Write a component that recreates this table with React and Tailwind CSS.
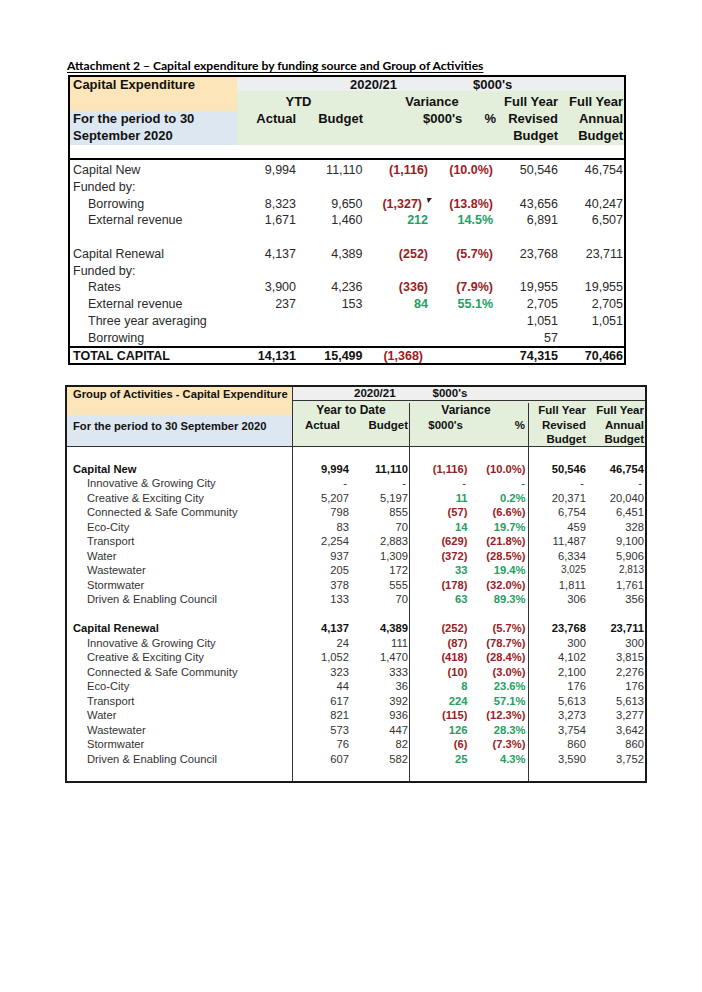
import React from "react";

const RED = "text-[#9b1c24]";
const GREEN = "text-[#24a062]";

function Cell1({ v, pr }) {
  if (v == null || v === "") return <div />;
  if (typeof v === "string") return <div className={`text-right ${pr}`}>{v}</div>;
  const color = v.c === "r" ? RED : GREEN;
  return (
    <div className={`text-right font-bold ${color} ${pr} relative`}>
      <span className={v.mark ? "mr-[6px]" : ""}>{v.v}</span>
      {v.mark && (
        <svg className="absolute right-[-3px] top-[2px]" width="5" height="5" viewBox="0 0 5 5">
          <polygon points="0,0 5,0 1,5" fill="#3b1414" />
        </svg>
      )}
    </div>
  );
}

const t1pr = ["pr-[3px]", "pr-[1.5px]", "pr-[1px]", "pr-[1px]", "pr-[1px]", "pr-[1px]"];

function Row1({ label, indent, vals = [] }) {
  return (
    <div className="grid grid-cols-[167px_62px_65px_65px_65px_65px_65px] h-[16.75px] leading-[16.75px]">
      <div className={indent ? "pl-[18px]" : "pl-[3px]"}>{label}</div>
      {[0, 1, 2, 3, 4, 5].map((i) => (
        <Cell1 key={i} v={vals[i]} pr={t1pr[i]} />
      ))}
    </div>
  );
}

const r = (v, mark) => ({ v, c: "r", mark });
const g = (v) => ({ v, c: "g" });

function Table1() {
  return (
    <div className="ml-[68px] mt-[1px] w-[558px] border-2 border-black text-[12.5px] text-[#2a2a2a]">
      <div className="flex h-[68px] text-[13px] font-bold text-[#111]">
        <div className="w-[167px] flex flex-col">
          <div className="h-[34px] bg-[#fce5b8] pl-[3px] leading-[16px]">Capital Expenditure</div>
          <div className="h-[34px] bg-[#dde7f2] pl-[3px] leading-[16.5px]">
            For the period to 30
            <br />
            September 2020
          </div>
        </div>
        <div className="w-[387px] flex flex-col">
          <div className="h-[14px] bg-[#eceef0] flex leading-[15px]">
            <span className="ml-[113px]">2020/21</span>
            <span className="ml-[76px]">$000's</span>
          </div>
          <div className="h-[54px] bg-[#e3efdb] pt-[2px] leading-[17px] grid grid-cols-[62px_65px_65px_65px_65px_65px] auto-rows-[17px]">
            <div className="col-span-2 text-center pr-[4px]">YTD</div>
            <div className="col-span-2 text-center pl-[6px]">Variance</div>
            <div className="text-right pr-[1px]">Full Year</div>
            <div className="text-right pr-[1px]">Full Year</div>
            <div className="text-right pr-[3px]">Actual</div>
            <div className="text-right pr-[1px]">Budget</div>
            <div className="col-span-2 flex justify-between pl-[59px] pr-[0px]">
              <span>$000's</span>
              <span className="mr-[-2px]">%</span>
            </div>
            <div className="text-right pr-[1px]">Revised</div>
            <div className="text-right pr-[1px]">Annual</div>
            <div />
            <div />
            <div />
            <div />
            <div className="text-right pr-[1px]">Budget</div>
            <div className="text-right pr-[1px]">Budget</div>
          </div>
        </div>
      </div>
      <div className="h-[13px]" />
      <div className="border-t-2 border-black pt-[2px]">
        <Row1 label="Capital New" vals={["9,994", "11,110", r("(1,116)"), r("(10.0%)"), "50,546", "46,754"]} />
        <Row1 label="Funded by:" />
        <Row1 label="Borrowing" indent vals={["8,323", "9,650", r("(1,327)", true), r("(13.8%)"), "43,656", "40,247"]} />
        <Row1 label="External revenue" indent vals={["1,671", "1,460", g("212"), g("14.5%"), "6,891", "6,507"]} />
        <Row1 label="" />
        <Row1 label="Capital Renewal" vals={["4,137", "4,389", r("(252)"), r("(5.7%)"), "23,768", "23,711"]} />
        <Row1 label="Funded by:" />
        <Row1 label="Rates" indent vals={["3,900", "4,236", r("(336)"), r("(7.9%)"), "19,955", "19,955"]} />
        <Row1 label="External revenue" indent vals={["237", "153", g("84"), g("55.1%"), "2,705", "2,705"]} />
        <Row1 label="Three year averaging" indent vals={["", "", "", "", "1,051", "1,051"]} />
        <Row1 label="Borrowing" indent vals={["", "", "", "", "57", ""]} />
      </div>
      <div className="border-t-2 border-black grid grid-cols-[167px_62px_65px_65px_65px_65px_65px] h-[17px] leading-[17px] font-bold text-[#111]">
        <div className="pl-[3px]">TOTAL CAPITAL</div>
        <div className="text-right pr-[3px]">14,131</div>
        <div className="text-right pr-[1.5px]">15,499</div>
        <div className={`text-right pr-[6px] ${RED}`}>(1,368)</div>
        <div />
        <div className="text-right pr-[1px]">74,315</div>
        <div className="text-right pr-[1px]">70,466</div>
      </div>
    </div>
  );
}

const t2pr = ["pr-[1px]", "pr-[1px]", "pr-[1.5px]", "pr-[2.5px]", "pr-[1px]", "pr-[1px]"];
const t2border = ["", "border-r border-[#333]", "", "border-r border-[#333]", "", ""];

function Cell2({ v, i, bold }) {
  const base = `text-right ${t2pr[i]} ${t2border[i]}`;
  if (v == null || v === "") return <div className={base} />;
  if (typeof v === "string") {
    if (v === "-") return <div className={`${base} pr-[3px]`}>-</div>;
    return <div className={`${base} ${bold ? "font-bold text-[#111]" : ""}`}>{v}</div>;
  }
  if (v.small) return <div className={`${base} text-[10px]`}>{v.v}</div>;
  const color = v.c === "r" ? RED : GREEN;
  return <div className={`${base} font-bold ${color}`}>{v.v}</div>;
}

function Row2({ label, indent, bold, vals = [] }) {
  return (
    <div className="grid grid-cols-[226px_57px_60px_59px_60px_58px_58px] h-[14.5px] leading-[14.5px]">
      <div className={`border-r border-[#333] ${indent ? "pl-[20px]" : "pl-[6px]"} ${bold ? "font-bold text-[#111]" : ""}`}>{label}</div>
      {[0, 1, 2, 3, 4, 5].map((i) => (
        <Cell2 key={i} v={vals[i]} i={i} bold={bold} />
      ))}
    </div>
  );
}

const sm = (v) => ({ v, small: true });

function Table2() {
  const d = "-";
  return (
    <div className="ml-[65px] mt-[20px] w-[582px] border-2 border-[#1a1a1a] text-[11.2px] text-[#333]">
      <div className="flex h-[60px] border-b border-[#333] font-bold text-[11.5px] text-[#111]">
        <div className="w-[226px] border-r border-[#333] flex flex-col text-[11.2px] whitespace-nowrap">
          <div className="h-[28px] bg-[#fce5b8] pl-[6px] leading-[15px]">Group of Activities - Capital Expenditure</div>
          <div className="h-[31px] bg-[#dde7f2] pl-[6px] leading-[22px]">For the period to 30 September 2020</div>
        </div>
        <div className="w-[352px] flex flex-col">
          <div className="h-[14px] bg-[#efefef] border-b border-[#333] flex leading-[13px]">
            <span className="ml-[61px]">2020/21</span>
            <span className="ml-[37px]">$000's</span>
          </div>
          <div className="h-[45px] bg-[#e3efdb] flex leading-[14.5px] pt-[2px]">
            <div className="w-[117px] border-r border-[#333]">
              <div className="text-center text-[12px]">Year to Date</div>
              <div className="grid grid-cols-[57px_59px]">
                <div className="text-center pl-[2px]">Actual</div>
                <div className="text-right pr-[1px]">Budget</div>
              </div>
            </div>
            <div className="w-[119px] border-r border-[#333]">
              <div className="text-center pr-[6px] text-[12px]">Variance</div>
              <div className="grid grid-cols-[59px_59px]">
                <div className="text-right pr-[6px]">$000's</div>
                <div className="text-right pr-[3px]">%</div>
              </div>
            </div>
            <div className="w-[116px] grid grid-cols-[58px_58px] auto-rows-[14.5px]">
              <div className="text-right pr-[1px]">Full Year</div>
              <div className="text-right pr-[1px]">Full Year</div>
              <div className="text-right pr-[1px]">Revised</div>
              <div className="text-right pr-[1px]">Annual</div>
              <div className="text-right pr-[1px]">Budget</div>
              <div className="text-right pr-[1px]">Budget</div>
            </div>
          </div>
        </div>
      </div>
      <div>
        <Row2 label="" />
        <Row2 label="Capital New" bold vals={["9,994", "11,110", r("(1,116)"), r("(10.0%)"), "50,546", "46,754"]} />
        <Row2 label="Innovative & Growing City" indent vals={[d, d, d, d, d, d]} />
        <Row2 label="Creative & Exciting City" indent vals={["5,207", "5,197", g("11"), g("0.2%"), "20,371", "20,040"]} />
        <Row2 label="Connected & Safe Community" indent vals={["798", "855", r("(57)"), r("(6.6%)"), "6,754", "6,451"]} />
        <Row2 label="Eco-City" indent vals={["83", "70", g("14"), g("19.7%"), "459", "328"]} />
        <Row2 label="Transport" indent vals={["2,254", "2,883", r("(629)"), r("(21.8%)"), "11,487", "9,100"]} />
        <Row2 label="Water" indent vals={["937", "1,309", r("(372)"), r("(28.5%)"), "6,334", "5,906"]} />
        <Row2 label="Wastewater" indent vals={["205", "172", g("33"), g("19.4%"), sm("3,025"), sm("2,813")]} />
        <Row2 label="Stormwater" indent vals={["378", "555", r("(178)"), r("(32.0%)"), "1,811", "1,761"]} />
        <Row2 label="Driven & Enabling Council" indent vals={["133", "70", g("63"), g("89.3%"), "306", "356"]} />
        <Row2 label="" />
        <Row2 label="Capital Renewal" bold vals={["4,137", "4,389", r("(252)"), r("(5.7%)"), "23,768", "23,711"]} />
        <Row2 label="Innovative & Growing City" indent vals={["24", "111", r("(87)"), r("(78.7%)"), "300", "300"]} />
        <Row2 label="Creative & Exciting City" indent vals={["1,052", "1,470", r("(418)"), r("(28.4%)"), "4,102", "3,815"]} />
        <Row2 label="Connected & Safe Community" indent vals={["323", "333", r("(10)"), r("(3.0%)"), "2,100", "2,276"]} />
        <Row2 label="Eco-City" indent vals={["44", "36", g("8"), g("23.6%"), "176", "176"]} />
        <Row2 label="Transport" indent vals={["617", "392", g("224"), g("57.1%"), "5,613", "5,613"]} />
        <Row2 label="Water" indent vals={["821", "936", r("(115)"), r("(12.3%)"), "3,273", "3,277"]} />
        <Row2 label="Wastewater" indent vals={["573", "447", g("126"), g("28.3%"), "3,754", "3,642"]} />
        <Row2 label="Stormwater" indent vals={["76", "82", r("(6)"), r("(7.3%)"), "860", "860"]} />
        <Row2 label="Driven & Enabling Council" indent vals={["607", "582", g("25"), g("4.3%"), "3,590", "3,752"]} />
        <Row2 label="" />
      </div>
    </div>
  );
}

export default function App() {
  return (
    <div className="w-[702px] h-[992px] bg-white overflow-hidden pt-[58px] font-['Liberation_Sans',Arial,sans-serif]">
      <div className="ml-[67px] h-[16px] leading-[16px] text-[12.1px] font-bold text-black underline underline-offset-[2px] font-['Lato','Liberation_Sans',sans-serif] whitespace-nowrap">
        Attachment 2 – Capital expenditure by funding source and Group of Activities
      </div>
      <Table1 />
      <Table2 />
    </div>
  );
}
